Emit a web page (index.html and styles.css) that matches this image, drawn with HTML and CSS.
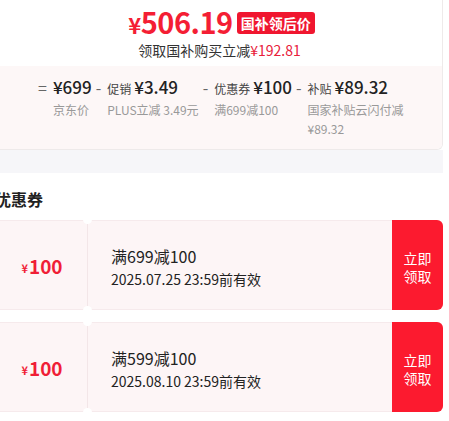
FILE: index.html
```html
<!DOCTYPE html>
<html lang="zh-CN">
<head>
  <meta charset="UTF-8">
  <meta name="viewport" content="width=device-width, initial-scale=1.0">
  <title>国补优惠</title>
  <link rel="stylesheet" href="styles.css">
</head>
<body>
  <div class="page">
    <!-- Price summary -->
    <div class="price-card">
      <div class="price-top">
        <div class="final-price">
          <span class="price"><span class="yen">¥</span>506.19</span>
          <span class="badge">国补领后价</span>
        </div>
        <div class="saving">领取国补购买立减<span class="red">¥192.81</span></div>
      </div>
      <div class="breakdown">
        <div class="item">
          <span class="op">=</span>
          <div class="block">
            <div class="line"><span class="amount">¥699</span></div>
            <div class="desc">京东价</div>
          </div>
        </div>
        <div class="item">
          <span class="op">-</span>
          <div class="block">
            <div class="line"><span class="tag">促销</span><span class="amount">¥3.49</span></div>
            <div class="desc">PLUS立减 3.49元</div>
          </div>
        </div>
        <div class="item">
          <span class="op">-</span>
          <div class="block">
            <div class="line"><span class="tag">优惠券</span><span class="amount">¥100</span></div>
            <div class="desc">满699减100</div>
          </div>
        </div>
        <div class="item">
          <span class="op">-</span>
          <div class="block wide">
            <div class="line"><span class="tag">补贴</span><span class="amount">¥89.32</span></div>
            <div class="desc">国家补贴云闪付减¥89.32</div>
          </div>
        </div>
      </div>
    </div>

    <div class="divider"></div>

    <!-- Coupons -->
    <div class="coupons">
      <h2>优惠券</h2>
      <div class="coupon">
        <div class="stub"><span class="c-yen">¥</span>100</div>
        <div class="info">
          <div class="rule">满699减100</div>
          <div class="expire">2025.07.25 23:59前有效</div>
        </div>
        <button class="claim">立即<br>领取</button>
      </div>
      <div class="coupon">
        <div class="stub"><span class="c-yen">¥</span>100</div>
        <div class="info">
          <div class="rule">满599减100</div>
          <div class="expire">2025.08.10 23:59前有效</div>
        </div>
        <button class="claim">立即<br>领取</button>
      </div>
    </div>
  </div>
</body>
</html>
```

FILE: styles.css
```css
body {
  margin: 0;
  font-family: "Noto Sans CJK SC", "Noto Sans", sans-serif;
  color: #222;
  background: #fff;
  overflow: hidden;
}
.page {
  width: 446px;
  margin-left: -3px;
}
.price-card {
  border: 1px solid #eeeaea;
  border-top: none;
  border-left: none;
  border-radius: 0 0 6px 0;
  overflow: hidden;
}
.price-top {
  height: 66px;
  padding-top: 4px;
  box-sizing: border-box;
  text-align: center;
  background: #fff;
}
.final-price {
  display: flex;
  justify-content: center;
  align-items: center;
  gap: 4px;
  height: 36px;
  padding-left: 4px;
}
.price {
  color: #f41e34;
  font-size: 29px;
  font-weight: 700;
  letter-spacing: -0.5px;
  line-height: 36px;
}
.yen {
  font-size: 22px;
}
.badge {
  background: #f0162f;
  color: #fff;
  font-size: 14px;
  font-weight: 700;
  padding: 0 4px;
  height: 22px;
  line-height: 22px;
  border-radius: 3px;
  margin-top: 2px;
}
.saving {
  font-size: 14px;
  line-height: 20px;
  color: #333;
}
.red {
  color: #e8203a;
}
.breakdown {
  background: #fdf7f7;
  height: 83px;
  display: flex;
  gap: 4px;
  padding: 8px 0 0 41px;
  box-sizing: border-box;
}
.item {
  display: flex;
  gap: 6px;
}
.op {
  color: #666;
  font-size: 16px;
  line-height: 26px;
}
.block.wide {
  width: 98px;
}
.line {
  display: flex;
  align-items: baseline;
  gap: 3px;
  height: 26px;
}
.tag {
  font-size: 12px;
  color: #444;
}
.amount {
  font-size: 17px;
  font-weight: 500;
  color: #222;
}
.desc {
  font-size: 12px;
  line-height: 19px;
  color: #999;
}
.divider {
  height: 23px;
  background: #f6f6f9;
}
.coupons {
  padding-top: 15px;
}
.coupons h2 {
  margin: 0 0 10px -2px;
  font-size: 16px;
  font-weight: 700;
  line-height: 22px;
}
.coupon {
  position: relative;
  display: flex;
  height: 90px;
  margin-bottom: 12px;
  background: #fdf5f6;
  border: 1px solid #f6eaec;
  border-left: none;
  border-radius: 0 6px 6px 0;
  box-sizing: border-box;
}
.stub {
  position: relative;
  width: 91px;
  display: flex;
  justify-content: center;
  align-items: center;
  color: #f01e36;
  font-size: 19px;
  font-weight: 700;
  border-right: 1px solid #f3e6e8;
  padding-top: 1px;
  box-sizing: border-box;
}
.stub::before,
.stub::after {
  content: "";
  position: absolute;
  right: -5px;
  width: 9px;
  height: 9px;
  border-radius: 50%;
  background: #fff;
}
.stub::before {
  top: -6px;
}
.stub::after {
  bottom: -6px;
}
.c-yen {
  font-size: 11px;
  margin-top: 4px;
  margin-right: 1px;
}
.info {
  flex: 1;
  display: flex;
  flex-direction: column;
  justify-content: center;
  padding: 5px 0 0 23px;
}
.rule {
  font-size: 16px;
  line-height: 23px;
  color: #222;
}
.expire {
  font-size: 14px;
  line-height: 23px;
  color: #222;
}
.claim {
  width: 51px;
  margin: -1px -1px -1px 0;
  border: none;
  border-radius: 0 6px 6px 0;
  background: #fc1a2f;
  color: #fff;
  font-family: inherit;
  font-size: 14px;
  line-height: 18px;
  padding: 3px 0 0;
}
```
